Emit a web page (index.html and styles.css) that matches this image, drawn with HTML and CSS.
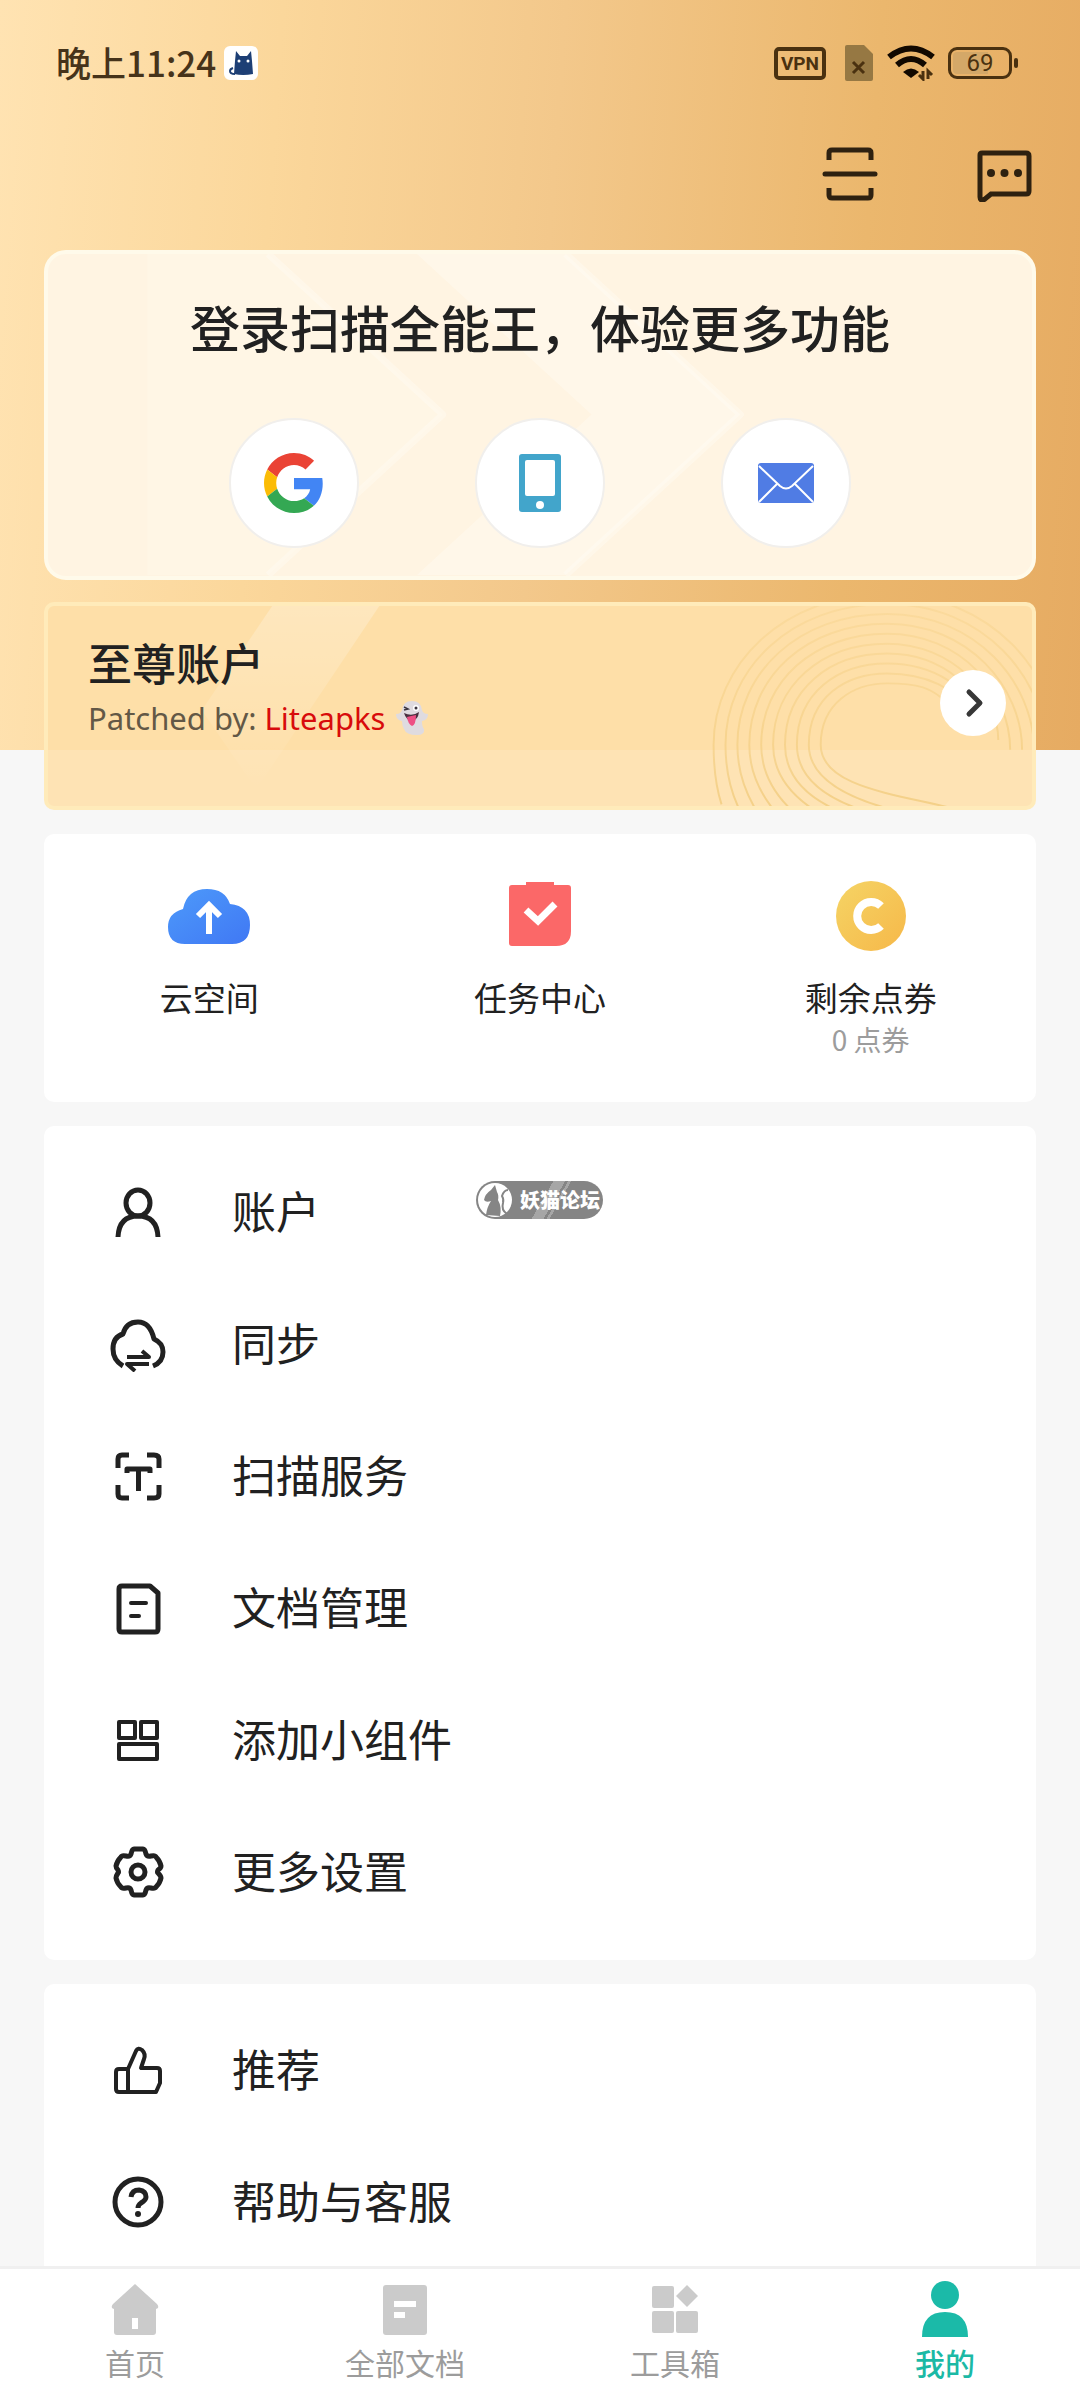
FILE: index.html
```html
<!DOCTYPE html>
<html lang="zh-CN">
<head>
<meta charset="utf-8">
<meta name="viewport" content="width=device-width, initial-scale=1">
<title>扫描全能王 - 我的</title>
<link rel="stylesheet" href="styles.css">
</head>
<body>
<div class="app">
  <main class="page">
    <header class="status">
      <span class="clock">晚上11:24</span>
      <svg class="app-badge" width="34" height="34" viewBox="0 0 34 34" aria-hidden="true"><rect width="34" height="34" rx="6" fill="#fff"/><path d="M12 5l4 5h7l4-5 1 10 1 13q-10 2-19 0l1-13z" fill="#1d3f75"/><path d="M11 28q-5 0-5-3 0-2 3-3" fill="none" stroke="#1d3f75" stroke-width="2"/><circle cx="15" cy="15" r="1.500" fill="#fff"/><circle cx="24" cy="15" r="1.500" fill="#fff"/></svg>
      <div class="status-right">
        <span class="vpn">VPN</span>
        <svg width="30" height="38" viewBox="0 0 30 38" aria-hidden="true"><path d="M3 1h17l9 9v25q0 2-2 2H3q-2 0-2-2V3q0-2 2-2z" fill="#967843"/><path d="M9 18l11 11M20 18L9 29" stroke="#4a3110" stroke-width="3"/></svg>
        <svg width="50" height="36" viewBox="0 0 50 36" aria-hidden="true"><g fill="none" stroke="#120900" stroke-width="6"><path d="M3 12q22-17 44 0"/><path d="M11 20q14-12 28 0"/></g><path d="M17 27q8-7 16 0l-8 6z" fill="#120900"/><path d="M37 26v8l-4-4M42 34v-8l4 4" fill="none" stroke="#4a3110" stroke-width="3"/></svg>
        <span class="battery">69</span>
      </div>
    </header>

    <div class="toolbar">
      <button class="icon-button" type="button" aria-label="扫一扫">
        <svg width="56" height="56" viewBox="0 0 56 56" fill="none" stroke="#2e2110" stroke-width="5" aria-hidden="true"><path d="M7 14V7q0-3 3-3h36q3 0 3 3v7M7 42v7q0 3 3 3h36q3 0 3-3v-7"/><path d="M3 28h50" stroke-linecap="round"/></svg>
      </button>
      <button class="icon-button" type="button" aria-label="消息">
        <svg width="56" height="56" viewBox="0 0 56 56" aria-hidden="true"><path d="M6 7h44q3 0 3 3v35q0 3-3 3H15l-6 5q-5 3-5-2V9q0-2 2-2z" fill="none" stroke="#2e2110" stroke-width="5"/><g fill="#2e2110"><circle cx="15" cy="27" r="4"/><circle cx="28.500" cy="27" r="4"/><circle cx="42" cy="27" r="4"/></g></svg>
      </button>
    </div>

    <div class="cards">
      <section class="login">
        <svg class="login-art" viewBox="0 0 992 329" preserveAspectRatio="none" aria-hidden="true">
          <g fill="none" stroke="#fffdf6" stroke-opacity=".4" stroke-width="7" stroke-linejoin="round"><path d="M222 0l176 164-176 164"/><path d="M522 0l176 164-176 164"/></g>
          <path d="M372 0h150l176 164-176 164H372l176-164z" fill="#fffdf6" fill-opacity=".4"/>
          <path d="M100 0h122l176 164-176 164H100z" fill="#fffdf6" fill-opacity=".2"/>
        </svg>
        <h1 class="login-title">登录扫描全能王，体验更多功能</h1>
        <div class="login-ways">
          <button class="way" type="button" aria-label="Google 登录">
            <svg width="60" height="60" viewBox="0 0 48 48" aria-hidden="true"><path fill="#EA4335" d="M24 9.500c3.540 0 6.710 1.220 9.210 3.600l6.850-6.850C35.900 2.380 30.470 0 24 0 14.620 0 6.510 5.380 2.560 13.220l7.980 6.190C12.430 13.720 17.740 9.500 24 9.500z"/><path fill="#4285F4" d="M46.980 24.550c0-1.570-.15-3.090-.38-4.550H24v9.020h12.940c-.58 2.960-2.260 5.480-4.780 7.180l7.730 6c4.510-4.180 7.090-10.360 7.090-17.650z"/><path fill="#FBBC05" d="M10.530 28.590c-.48-1.450-.76-2.990-.76-4.590s.27-3.140.76-4.590l-7.980-6.190C.92 16.460 0 20.120 0 24c0 3.880.92 7.540 2.560 10.780l7.970-6.190z"/><path fill="#34A853" d="M24 48c6.480 0 11.930-2.130 15.890-5.810l-7.730-6c-2.150 1.450-4.920 2.300-8.160 2.300-6.260 0-11.570-4.220-13.470-9.910l-7.980 6.190C6.510 42.620 14.620 48 24 48z"/></svg>
          </button>
          <button class="way" type="button" aria-label="手机登录">
            <svg width="42" height="58" viewBox="0 0 42 58" aria-hidden="true"><rect width="42" height="58" rx="3" fill="#42a5cb"/><rect x="6" y="6" width="30" height="36" rx="2" fill="#fff"/><circle cx="21" cy="51" r="4" fill="#fff"/></svg>
          </button>
          <button class="way" type="button" aria-label="邮箱登录">
            <svg width="56" height="40" viewBox="0 0 56 40" aria-hidden="true"><rect width="56" height="40" rx="3" fill="#507ce4"/><path d="M1 3l21 20q6 5 12 0L55 3M1 39l18-18M55 39L37 21" fill="none" stroke="#fff" stroke-width="2"/></svg>
          </button>
        </div>
      </section>

      <section class="premium">
        <svg class="premium-art" viewBox="0 0 992 208" preserveAspectRatio="xMaxYMin slice" aria-hidden="true">
          <defs>
            <linearGradient id="bandFill" x1="0" y1="0" x2="0" y2="1"><stop offset="0" stop-color="#fff" stop-opacity=".25"/><stop offset="1" stop-color="#fff" stop-opacity="0"/></linearGradient>
            <linearGradient id="lineFade" gradientUnits="userSpaceOnUse" x1="0" y1="0" x2="0" y2="208"><stop offset="0" stop-color="#eec56e" stop-opacity=".2"/><stop offset=".5" stop-color="#eec56e" stop-opacity=".35"/><stop offset="1" stop-color="#eec56e" stop-opacity=".65"/></linearGradient>
          </defs>
          <path d="M226 0h108L210 185l-55-80z" fill="url(#bandFill)"/>
          <g fill="none" stroke="url(#lineFade)" stroke-width="2">
            <path d="M679 200Q671 175 671 140C671 60 740-12 846-12S1018 70 1018 145"/>
            <path d="M696 203Q683 175 683 140C683 64 748-2 846-2S1006 74 1006 145"/>
            <path d="M714 206Q695 175 695 140C695 68 756 8 846 8S994 78 994 145"/>
            <path d="M732 206Q707 175 707 140C707 72 764 18 846 18S982 82 982 145"/>
            <path d="M752 208Q719 178 719 140C719 76 772 28 846 28S970 86 970 145"/>
            <path d="M776 208Q731 180 731 140C731 80 780 38 846 38S958 90 958 135"/>
            <path d="M800 208Q743 184 743 140C743 84 788 48 846 48S946 90 946 125"/>
            <path d="M828 208Q755 186 755 140C755 88 796 58 846 58S930 86 936 110"/>
            <path d="M862 208Q767 186 767 140C767 92 804 68 846 68S916 86 922 100"/>
            <path d="M920 206C860 190 779 184 779 140C779 98 812 78 846 78S890 84 900 92"/>
          </g>
        </svg>
        <div class="premium-text">
          <h2 class="premium-title">至尊账户</h2>
          <p class="premium-note">
            <span>Patched by: <span class="brand">Liteapks</span></span>
            <svg class="ghost" width="34" height="36" viewBox="0 0 34 36" role="img" aria-label="鬼脸"><path d="M17 1q9 0 10 9 1 4 6 4 0 6-6 7 0 6 2 8 1 6-7 6-11 0-13-6-2-3-2-8-6-1-6-7 5 0 6-4Q8 1 17 1z" fill="#dfdbe0"/><path d="M9 7l4 2-4 1" stroke="#3b3540" stroke-width="1.500" fill="none"/><circle cx="21" cy="8" r="3" fill="#fff"/><circle cx="21" cy="8" r="1.500" fill="#3b3540"/><path d="M9 13q8 4 15-1-1 8-7 9-6-1-8-8z" fill="#4a3040"/><path d="M12 17q4-1 9-2 0 10-4 11-4-2-5-9z" fill="#ee4f84"/></svg>
          </p>
        </div>
        <button class="go" type="button" aria-label="查看">
          <svg width="20" height="30" viewBox="0 0 20 30" fill="none" stroke="#373737" stroke-width="5" stroke-linecap="round" stroke-linejoin="round" aria-hidden="true"><path d="M4 4l11 11L4 26"/></svg>
        </button>
      </section>

      <section class="card quick">
        <a class="quick-item" href="#cloud">
          <svg width="84" height="72" viewBox="0 0 84 72" aria-hidden="true"><defs><linearGradient id="cloudFill" x1="0" y1="0" x2="1" y2="1"><stop offset="0" stop-color="#4d9afa"/><stop offset="1" stop-color="#4078f4"/></linearGradient></defs><path d="M18 64Q1 64 1 47q0-14 15-18Q20 9 40 9q18 0 23 15 20 2 20 21 0 19-18 19z" fill="url(#cloudFill)"/><path d="M42 54V26M31 36l11-11 11 11" fill="none" stroke="#fff" stroke-width="6"/></svg>
          <span class="quick-label">云空间</span>
        </a>
        <a class="quick-item" href="#tasks">
          <svg width="62" height="72" viewBox="0 0 62 72" aria-hidden="true"><path d="M3 5h14V2h28v3h14q3 0 3 3v43q0 15-15 15H3q-3 0-3-3V8q0-3 3-3z" fill="#fb6868"/><path d="M17 30l12 11 17-17" fill="none" stroke="#fff" stroke-width="7"/></svg>
          <span class="quick-label">任务中心</span>
        </a>
        <a class="quick-item" href="#points">
          <svg width="72" height="72" viewBox="0 0 72 72" aria-hidden="true"><defs><linearGradient id="coinFill" x1="0" y1="0" x2="1" y2="1"><stop offset="0" stop-color="#f5d465"/><stop offset="1" stop-color="#f6b849"/></linearGradient></defs><circle cx="36" cy="36" r="35" fill="url(#coinFill)"/><path d="M46 26a14 14 0 1 0 0 20" fill="none" stroke="#fff" stroke-width="8"/></svg>
          <span class="quick-label">剩余点券</span>
          <span class="quick-sub">0 点券</span>
        </a>
      </section>

      <nav class="card menu" aria-label="设置">
        <a class="row" href="#account">
          <svg class="row-icon" viewBox="0 0 56 56" aria-hidden="true"><ellipse cx="28" cy="19" rx="12" ry="13"/><path d="M8 53q1-21 20-21t20 21"/></svg>
          <span>账户</span></a>
        <a class="row" href="#sync">
          <svg class="row-icon" viewBox="0 0 56 56" aria-hidden="true"><path d="M13 50Q3 44 3 33q0-12 10-15Q16 6 28 6t16 17q9 4 9 13 0 10-10 14"/><path d="M17 41h22l-7-6M39 48H17l8 7" stroke-width="4"/></svg>
          <span>同步</span></a>
        <a class="row" href="#scan">
          <svg class="row-icon" viewBox="0 0 56 56" aria-hidden="true"><path d="M8 20v-9q0-4 4-4h7M37 7h7q5 0 5 4v9M49 37v9q0 4-5 4h-7M19 50h-7q-4 0-4-4v-9"/><path d="M17 25v-4h23v4M28.500 21v22"/></svg>
          <span>扫描服务</span></a>
        <a class="row" href="#documents">
          <svg class="row-icon" viewBox="0 0 56 56" aria-hidden="true"><path d="M12 6h28l8 7v36q0 3-3 3H12q-3 0-3-3V9q0-3 3-3z"/><path d="M21 23h15M21 36h8" stroke-width="4" stroke-linecap="round"/></svg>
          <span>文档管理</span></a>
        <a class="row" href="#widgets">
          <svg class="row-icon" viewBox="0 0 56 56" aria-hidden="true"><path d="M9 10h16v16H9zM31 10h16v16H31zM9 32h38v15H9z" stroke-width="4"/></svg>
          <span>添加小组件</span></a>
        <a class="row" href="#settings">
          <svg class="row-icon" viewBox="0 0 56 56" aria-hidden="true"><path d="M24 5h9q2 0 3 5 1 3 5 2 4-1 5 1 4 4 5 9 0 2-3 4-1 2 0 3 3 3 3 5-1 5-5 9-1 2-5 1t-5 2q-1 5-3 5h-9q-2 0-3-5-1-3-5-2t-5-1q-4-4-5-9 0-2 2-5 1-1 0-3-2-2-2-4 1-5 5-9 1-2 5-1t5-2q1-5 3-5z"/><circle cx="28" cy="28" r="7"/></svg>
          <span>更多设置</span></a>
        <div class="watermark">
          <svg width="38" height="38" viewBox="0 0 38 38" aria-hidden="true"><circle cx="19" cy="19" r="17" fill="#fff"/><path d="M10 34q1-8 5-14-5 2-7-1 1-6 7-10l4-5 2 7q2 3 1 8 4 7 2 16z" fill="#858585"/><path d="M31 33q-6-4-4-11 1-4-1-7 2-6 6-6" fill="none" stroke="#858585" stroke-width="2"/></svg>
          <span>妖猫论坛</span>
        </div>
      </nav>

      <nav class="card menu" aria-label="支持">
        <a class="row" href="#recommend">
          <svg class="row-icon" viewBox="0 0 56 56" aria-hidden="true"><path d="M18 50V27l8-18q2-4 6-1 4 4 2 9l-3 9h16q3 0 3 3v12l-4 9H9q-3 0-3-3V30q0-3 3-3h9" stroke-width="4"/></svg>
          <span>推荐</span></a>
        <a class="row" href="#help">
          <svg class="row-icon" viewBox="0 0 56 56" aria-hidden="true"><circle cx="28" cy="28" r="23"/><path d="M21 23q1-7 8-7 7 1 7 7 0 3-5 6-3 2-3 5"/><circle class="dot" cx="28" cy="40" r="3"/></svg>
          <span>帮助与客服</span></a>
      </nav>
    </div>
  </main>

  <nav class="tabs" aria-label="主导航">
    <a class="tab" href="#home">
      <svg width="60" height="60" viewBox="0 0 60 60" aria-hidden="true"><path d="M30 5l22 20q3 4-1 5v23q0 3-3 3H12q-3 0-3-3V30q-4-1-1-5z"/><path d="M27 39h6v11h-6z" fill="#fff"/></svg>
      <span>首页</span></a>
    <a class="tab" href="#all">
      <svg width="60" height="60" viewBox="0 0 60 60" aria-hidden="true"><rect x="8" y="6" width="44" height="50" rx="3"/><path d="M19 22h22v6H19zM19 33h11v6H19z" fill="#fff"/></svg>
      <span>全部文档</span></a>
    <a class="tab" href="#tools">
      <svg width="60" height="60" viewBox="0 0 60 60" aria-hidden="true"><rect x="7" y="7" width="22" height="22" rx="2"/><rect x="7" y="32" width="22" height="22" rx="2"/><rect x="31" y="32" width="22" height="22" rx="2"/><path d="M42 6l11 11-11 11-11-11z"/></svg>
      <span>工具箱</span></a>
    <a class="tab active" href="#me" aria-current="page">
      <svg width="60" height="60" viewBox="0 0 60 60" aria-hidden="true"><circle cx="30" cy="16" r="14"/><path d="M7 58q0-25 23-25t23 25z"/></svg>
      <span>我的</span></a>
  </nav>
</div>
</body>
</html>
```
FILE: styles.css
```css
* { box-sizing: border-box; }

body {
  margin: 0;
  background: #f7f7f7;
  color: #212121;
  font-family: "Noto Sans CJK SC", "Noto Sans", sans-serif;
}

h1, h2, p { margin: 0; }
a { color: inherit; text-decoration: none; }
button { padding: 0; border: 0; background: none; cursor: pointer; }
svg { display: block; flex: none; }

.app {
  display: flex;
  flex-direction: column;
  height: 100vh;
}

.page {
  flex: 1;
  min-height: 0;
  overflow-y: auto;
  scrollbar-width: none;
  background: linear-gradient(94deg, #ffe3b2 0%, #fbd79b 25%, #f3c88b 50%, #ebb76d 78%, #e6ab62 100%) 0 0 / 100% 750px no-repeat;
}

/* status bar */
.status {
  display: flex;
  align-items: center;
  gap: 8px;
  height: 126px;
  padding: 0 62px 0 56px;
  color: #46331a;
}
.clock { font-size: 35px; font-weight: 500; line-height: 40px; padding-bottom: 2px; }
.status-right {
  display: flex;
  align-items: center;
  gap: 12px;
  margin-left: auto;
}
.vpn {
  margin-right: 6px;
  padding: 0 3px;
  border: 4px solid #4a3110;
  border-radius: 5px;
  color: #4a3110;
  font: 700 19px/25px Roboto, sans-serif;
}
.battery {
  position: relative;
  width: 64px;
  margin-right: 6px;
  border: 3px solid #4a3110;
  border-radius: 9px;
  background: linear-gradient(90deg, #d4a868 64%, transparent 64%) content-box;
  padding: 2px;
  color: #4a3110;
  font: 400 24px/22px Roboto, sans-serif;
  text-align: center;
}
.battery::after {
  content: "";
  position: absolute;
  top: 8px;
  right: -9px;
  width: 4px;
  height: 10px;
  border-radius: 2px;
  background: #4a3110;
}

.toolbar {
  display: flex;
  justify-content: flex-end;
  align-items: center;
  gap: 98px;
  height: 96px;
  padding: 0 48px;
}

/* stacked cards */
.cards {
  display: flex;
  flex-direction: column;
  gap: 24px;
  padding: 28px 44px 20px;
}

.login {
  position: relative;
  display: flex;
  flex-direction: column;
  align-items: center;
  gap: 58px;
  padding: 38px 0 28px;
  border: 4px solid #fffaea;
  border-radius: 22px;
  background: #fff4e2;
  overflow: hidden;
}
.login-art, .premium-art {
  position: absolute;
  inset: 0;
  width: 100%;
  height: 100%;
}
.login-title {
  position: relative;
  font-size: 50px;
  font-weight: 500;
  line-height: 68px;
}
.login-ways {
  position: relative;
  display: flex;
  gap: 116px;
}
.way {
  display: flex;
  align-items: center;
  justify-content: center;
  width: 130px;
  height: 130px;
  border: 2px solid #f1efec;
  border-radius: 50%;
  background: #fff;
}

.premium {
  position: relative;
  display: flex;
  justify-content: space-between;
  align-items: flex-start;
  height: 208px;
  margin-top: -2px;
  padding: 26px 26px 0 40px;
  border: 4px solid #ffebba;
  border-radius: 10px;
  background: linear-gradient(#fedfa8 72%, #fee3b4 72%);
  overflow: hidden;
}
.premium-text { position: relative; }
.premium-title { font-size: 44px; font-weight: 500; line-height: 60px; }
.premium-note {
  display: flex;
  align-items: center;
  gap: 10px;
  color: #635846;
  font: 400 31px/52px "Noto Sans", sans-serif;
}
.brand { color: #d80b0b; }
.go {
  position: relative;
  display: flex;
  align-items: center;
  justify-content: center;
  width: 66px;
  height: 66px;
  margin-top: 38px;
  padding-left: 4px;
  border-radius: 50%;
  background: #fff;
}

.card {
  border-radius: 10px;
  background: #fff;
}

.quick {
  display: grid;
  grid-template-columns: repeat(3, 1fr);
  padding: 46px 0 44px;
}
.quick-item {
  display: flex;
  flex-direction: column;
  align-items: center;
}
.quick-label { margin-top: 22px; font-size: 33px; line-height: 46px; }
.quick-sub { color: #9c9c9c; font-size: 28px; line-height: 38px; }

.menu {
  position: relative;
  padding: 20px 0 22px;
}
.row {
  display: flex;
  align-items: center;
  gap: 66px;
  height: 132px;
  padding-left: 66px;
  font-size: 44px;
}
.row span { padding-bottom: 4px; }
.row-icon {
  width: 56px;
  height: 56px;
  fill: none;
  stroke: #212121;
  stroke-width: 5;
  stroke-linejoin: round;
}
.row-icon .dot { fill: #212121; stroke: none; }

.watermark {
  position: absolute;
  top: 55px;
  left: 432px;
  display: flex;
  align-items: center;
  gap: 6px;
  padding-right: 3px;
  border-radius: 19px;
  background: linear-gradient(120deg, #858585 52%, #a6a6a6 52% 60%, #858585 60% 62%, #a6a6a6 62% 64%, #858585 64%);
  color: #fff;
  font-size: 20px;
  font-weight: 900;
  line-height: 38px;
}

/* bottom navigation */
.tabs {
  display: grid;
  grid-template-columns: repeat(4, 1fr);
  padding: 10px 0 16px;
  border-top: 3px solid #f0f0f0;
  background: #fff;
}
.tab {
  display: flex;
  flex-direction: column;
  align-items: center;
  gap: 2px;
  color: #9c9c9c;
  font-size: 30px;
  line-height: 43px;
}
.tab svg { fill: #cbcbcb; }
.tab.active { color: #1bb9a5; font-weight: 500; }
.tab.active svg { fill: #1bbaa8; }
```
